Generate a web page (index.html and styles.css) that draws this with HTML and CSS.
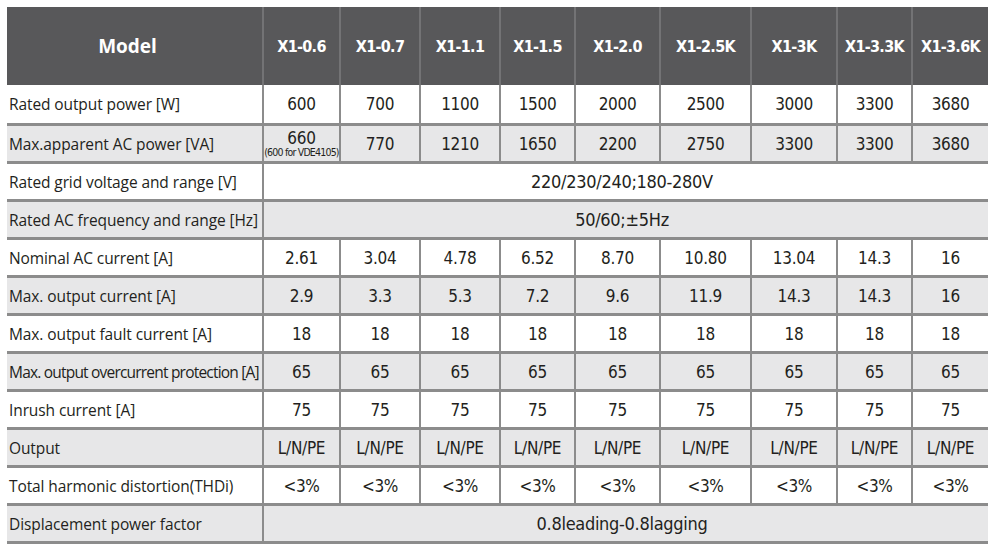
FILE: index.html
```html
<!DOCTYPE html>
<html>
<head>
<meta charset="utf-8">
<link rel="stylesheet" href="styles.css">
</head>
<body>
<table class="spec">
  <colgroup>
    <col class="c-label">
    <col style="width:77px"><col style="width:80px"><col style="width:80px"><col style="width:75px">
    <col style="width:85px"><col style="width:91px"><col style="width:86px"><col style="width:75px"><col style="width:76px">
  </colgroup>
  <thead>
    <tr>
      <th class="model">Model</th>
      <th>X1-0.6</th><th>X1-0.7</th><th>X1-1.1</th><th>X1-1.5</th><th>X1-2.0</th><th>X1-2.5K</th><th>X1-3K</th><th>X1-3.3K</th><th>X1-3.6K</th>
    </tr>
  </thead>
  <tbody>
    <tr class="first">
      <td class="label">Rated output power [W]</td>
      <td>600</td><td>700</td><td>1100</td><td>1500</td><td>2000</td><td>2500</td><td>3000</td><td>3300</td><td>3680</td>
    </tr>
    <tr class="alt">
      <td class="label">Max.apparent AC power [VA]</td>
      <td class="two"><span class="big">660</span><span class="small">(600 for VDE4105)</span></td><td>770</td><td>1210</td><td>1650</td><td>2200</td><td>2750</td><td>3300</td><td>3300</td><td>3680</td>
    </tr>
    <tr>
      <td class="label">Rated grid voltage and range [V]</td>
      <td colspan="9" class="span">220/230/240;180-280V</td>
    </tr>
    <tr class="alt">
      <td class="label">Rated AC frequency and range [Hz]</td>
      <td colspan="9" class="span">50/60;±5Hz</td>
    </tr>
    <tr>
      <td class="label">Nominal AC current [A]</td>
      <td>2.61</td><td>3.04</td><td>4.78</td><td>6.52</td><td>8.70</td><td>10.80</td><td>13.04</td><td>14.3</td><td>16</td>
    </tr>
    <tr class="alt">
      <td class="label">Max. output current [A]</td>
      <td>2.9</td><td>3.3</td><td>5.3</td><td>7.2</td><td>9.6</td><td>11.9</td><td>14.3</td><td>14.3</td><td>16</td>
    </tr>
    <tr>
      <td class="label">Max. output fault current [A]</td>
      <td>18</td><td>18</td><td>18</td><td>18</td><td>18</td><td>18</td><td>18</td><td>18</td><td>18</td>
    </tr>
    <tr class="alt">
      <td class="label tight">Max. output overcurrent protection [A]</td>
      <td>65</td><td>65</td><td>65</td><td>65</td><td>65</td><td>65</td><td>65</td><td>65</td><td>65</td>
    </tr>
    <tr>
      <td class="label">Inrush current [A]</td>
      <td>75</td><td>75</td><td>75</td><td>75</td><td>75</td><td>75</td><td>75</td><td>75</td><td>75</td>
    </tr>
    <tr class="alt">
      <td class="label">Output</td>
      <td>L/N/PE</td><td>L/N/PE</td><td>L/N/PE</td><td>L/N/PE</td><td>L/N/PE</td><td>L/N/PE</td><td>L/N/PE</td><td>L/N/PE</td><td>L/N/PE</td>
    </tr>
    <tr>
      <td class="label">Total harmonic distortion(THDi)</td>
      <td>&lt;3%</td><td>&lt;3%</td><td>&lt;3%</td><td>&lt;3%</td><td>&lt;3%</td><td>&lt;3%</td><td>&lt;3%</td><td>&lt;3%</td><td>&lt;3%</td>
    </tr>
    <tr class="alt last">
      <td class="label">Displacement power factor</td>
      <td colspan="9" class="span">0.8leading-0.8lagging</td>
    </tr>
  </tbody>
</table>
</body>
</html>
```
FILE: styles.css
```css
html, body {
  margin: 0;
  padding: 0;
  background: #ffffff;
}
body {
  padding: 7px 0 0 7px;
}
.spec {
  border-collapse: collapse;
  table-layout: fixed;
  width: 981px;
  color: #231f20;
  font-family: "Liberation Sans Narrow", "DejaVu Sans Condensed", "Liberation Sans", sans-serif;
}
.c-label {
  width: 256px;
}
.spec thead th {
  height: 78px;
  padding: 0;
  background: #58585a;
  color: #ffffff;
  font-weight: bold;
  font-size: 16px;
  letter-spacing: -0.7px;
  text-align: center;
  vertical-align: middle;
  border-left: 2px solid #737375;
}
.spec thead th.model {
  border-left: none;
  font-family: "Open Sans", "Noto Sans", sans-serif;
  font-size: 19px;
  letter-spacing: 0;
  padding-right: 14px;
}
.spec tbody td {
  height: 35px;
  padding: 0;
  text-align: center;
  vertical-align: middle;
  font-size: 17px;
  letter-spacing: -0.3px;
  border-left: 2px solid #8c8c8c;
  border-top: 3px solid #8c8c8c;
}
.spec tbody tr.first td {
  border-top: none;
  height: 38px;
}
.spec tbody tr.last td {
  border-bottom: 3px solid #8c8c8c;
}
.spec tbody tr.alt td {
  background: #e7e7e8;
}
.spec tbody td.label {
  border-left: none;
  text-align: left;
  padding-left: 2px;
  font-family: "Open Sans", "Noto Sans", sans-serif;
  font-size: 15.5px;
  letter-spacing: -0.1px;
  white-space: nowrap;
  overflow: hidden;
}
.spec tbody td.label.tight {
  letter-spacing: -0.8px;
}
.spec tbody td.span {
  font-size: 18px;
  padding-right: 8px;
}
.spec tbody td.two {
  line-height: 1;
}
.two .big {
  display: block;
  font-size: 17px;
}
.two .small {
  display: block;
  font-size: 10.5px;
  white-space: nowrap;
  letter-spacing: -0.8px;
}
```
